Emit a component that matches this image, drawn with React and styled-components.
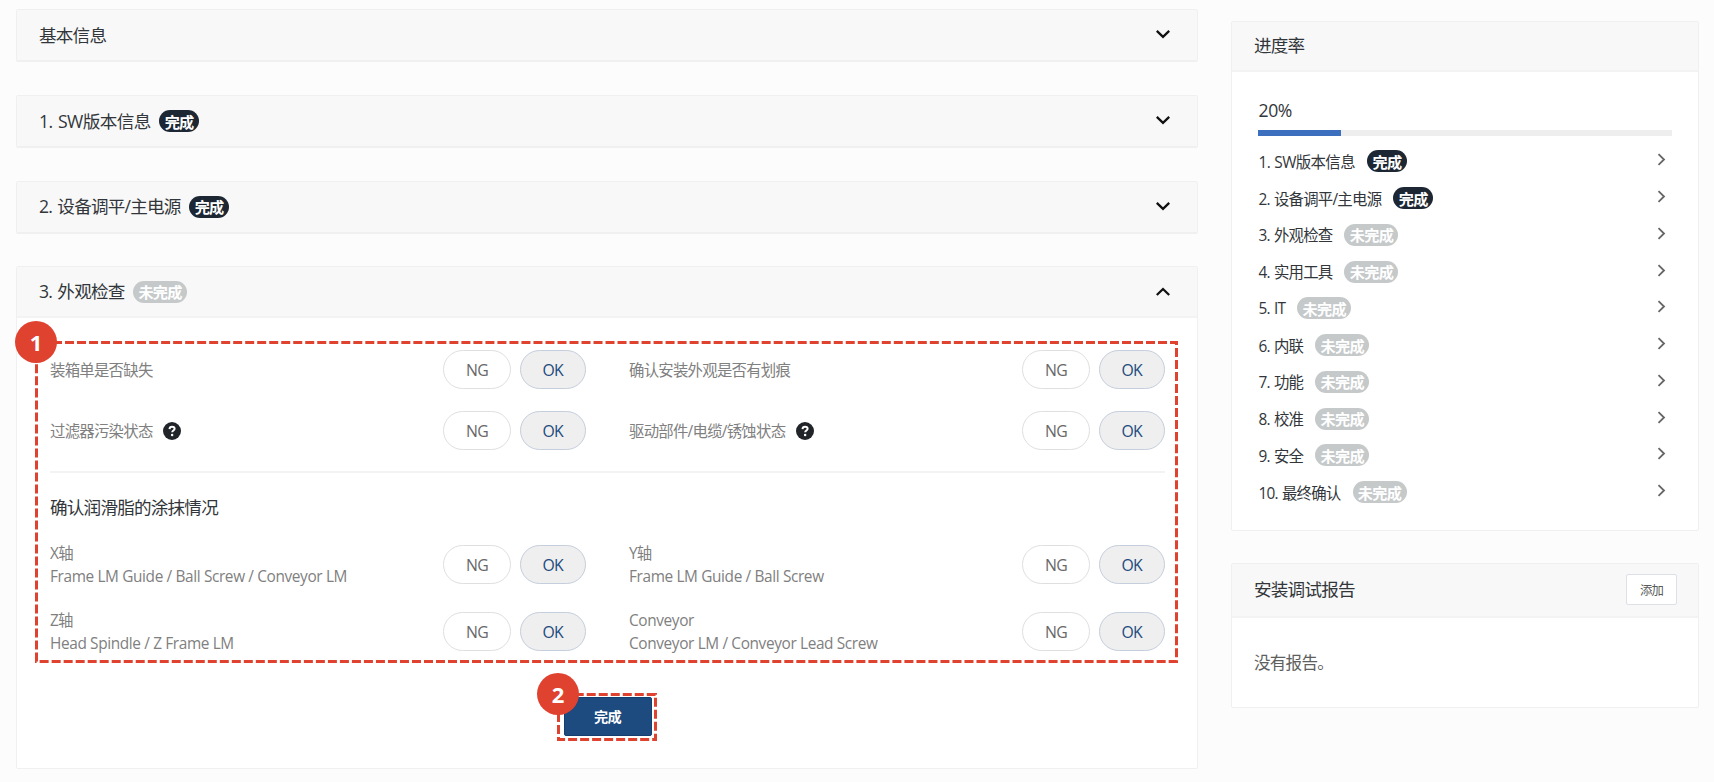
import React from "react";
import styled, { createGlobalStyle } from "styled-components";

const GlobalStyle = createGlobalStyle`
  * { box-sizing: border-box; }
  html, body { margin: 0; background: #fcfcfc; }
  body {
    font-family: "Open Sans", "Noto Sans CJK SC", sans-serif;
    font-size: 15.4px;
    letter-spacing: -0.8px;
    color: #32363a;
    overflow: hidden;
  }
  button { font: inherit; letter-spacing: inherit; margin: 0; padding: 0; }
`;

const Page = styled.div`
  display: flex;
  align-items: flex-start;
  gap: 33px;
  width: 1714px;
  height: 782px;
  padding: 9.4px 15px 0 16px;
`;

const MainColumn = styled.main`
  display: flex;
  flex-direction: column;
  gap: 32.67px;
  width: 1182px;
`;

const SideColumn = styled.aside`
  display: flex;
  flex-direction: column;
  gap: 32px;
  width: 468px;
  padding-top: 11.6px;
`;

const Card = styled.section`
  position: relative;
  height: ${(p) => p.$height}px;
  border: 1px solid #f0f0f0;
  border-bottom-width: ${(p) => (p.$folded ? 2 : 1)}px;
  border-radius: 2px;
  background: #fff;
`;

const CardHeader = styled.header`
  display: flex;
  align-items: center;
  height: ${(p) => p.$height}px;
  padding: 0 ${(p) => p.$right ?? 26}px 0 22px;
  border-bottom: ${(p) => (p.$line ? "2px solid #f3f3f3" : "none")};
  background: #f8f8f8;
`;

const Title = styled.h2`
  flex: none;
  margin: -1px 0 0;
  font-size: 17.6px;
  font-weight: 400;
  line-height: 24px;
  white-space: nowrap;
  word-spacing: 1.5px;
  letter-spacing: ${(p) => p.$spacing ?? -0.8}px;
`;

const HeaderEnd = styled.span`
  display: flex;
  margin-left: auto;
`;

const Badge = styled.span`
  flex: none;
  display: flex;
  align-items: center;
  justify-content: center;
  width: ${(p) => (p.$done ? 40 : 54)}px;
  height: 22px;
  margin-left: ${(p) => p.$gap}px;
  padding-top: 1px;
  border-radius: 11px;
  background: ${(p) => (p.$done ? "#1d2733" : "#c5c9ca")};
  color: #fff;
  font-size: 15.2px;
  font-weight: 700;
  line-height: 20px;
  white-space: nowrap;
`;

const Body = styled.div`
  position: relative;
  padding: 32px 32px 0 33px;
`;

const CheckGrid = styled.div`
  display: grid;
  grid-template-columns: 536px 536px;
  column-gap: 43px;
  row-gap: ${(p) => p.$rowGap}px;
`;

const CheckItem = styled.div`
  display: flex;
  align-items: center;
  height: 39px;
`;

const CheckLabel = styled.div`
  padding-top: 2px;
  color: #808080;
  font-size: 15.4px;
  line-height: 22.6px;
  letter-spacing: -0.74px;
  white-space: nowrap;
`;

const LatinText = styled.div`
  letter-spacing: -0.37px;
`;

const Choices = styled.div`
  display: flex;
  gap: 9px;
  margin-left: auto;
`;

const Choice = styled.button`
  width: ${(p) => (p.$on ? 66 : 68)}px;
  height: 39px;
  padding-right: ${(p) => (p.$on ? 0.5 : 0)}px;
  border: 1px solid ${(p) => (p.$on ? "#c5cedd" : "#dfdfdf")};
  border-radius: 20px;
  background: ${(p) => (p.$on ? "#efefef" : "#fff")};
  color: ${(p) => (p.$on ? "#1d4a7d" : "#686868")};
  font-size: 15.8px;
`;

const Divider = styled.hr`
  height: 2px;
  margin: 21px 0 0;
  border: 0;
  background: #f3f3f3;
`;

const GroupTitle = styled.h3`
  margin: 22px 0 26px;
  font-size: 17.6px;
  font-weight: 400;
  line-height: 24px;
`;

const HelpSvg = styled.svg`
  display: block;
  margin-left: 10.5px;
`;

const SubmitRow = styled.div`
  display: flex;
  padding: 46px 0 0 513.5px;
`;

const SubmitButton = styled.button`
  width: 88px;
  height: 39px;
  padding-bottom: 1.5px;
  border: 1px solid #143d70;
  border-radius: 2px;
  background: #1d4a7f;
  color: #fff;
  font-size: 14.2px;
  font-weight: 700;
`;

const Marks = styled.svg`
  position: absolute;
  inset: 0;
  pointer-events: none;
`;

const MarkNumber = styled.span`
  position: absolute;
  left: ${(p) => p.$x}px;
  top: ${(p) => p.$y}px;
  display: flex;
  align-items: center;
  justify-content: center;
  width: 42px;
  height: 42px;
  border-radius: 50%;
  background: #df422f;
  color: #fff;
  font-family: "Noto Sans", sans-serif;
  font-size: 22px;
  font-weight: 700;
  letter-spacing: 0;
  line-height: 1;
`;

const ProgressBody = styled.div`
  padding: 26px 26px 0;
`;

const Percent = styled.div`
  padding-left: 0.5px;
  font-size: 17.6px;
  line-height: 24px;
  letter-spacing: -0.4px;
`;

const Track = styled.div`
  height: 5.5px;
  margin-top: 8.5px;
  background: #eee;
`;

const Fill = styled.div`
  height: 5.5px;
  background: #3d6fbf;
`;

const StepList = styled.ul`
  margin: 7px 0 0;
  padding: 0 6px 0 0.5px;
  list-style: none;
`;

const Step = styled.li`
  display: flex;
  align-items: center;
  height: 36.75px;
  white-space: nowrap;
  word-spacing: 0.8px;
  letter-spacing: ${(p) => (p.$wide ? -0.6 : -0.75)}px;
`;

const StepArrow = styled.svg`
  display: block;
  margin: -3px 0 0 auto;
`;

const AddButton = styled.button`
  width: 51px;
  height: 31px;
  border: 1px solid #dde0e6;
  border-radius: 2px;
  background: #fff;
  color: #5a5a5a;
  font-size: 12.4px;
`;

const EmptyReport = styled.p`
  margin: 0;
  padding: 33px 22px;
  color: #5e5e5e;
  font-size: 16.6px;
  line-height: 24px;
`;

const Chevron = ({ up }) => (
  <svg width="16" height="12" viewBox="0 0 16 12" fill="none" stroke="#111" strokeWidth="2.3">
    <path d={up ? "M1.8 9 8 3 14.2 9" : "M1.8 1.8 8 7.8 14.2 1.8"} />
  </svg>
);

const HelpIcon = () => (
  <HelpSvg width="18" height="18" viewBox="0 0 18 18">
    <circle cx="9" cy="9" r="9" fill="#212529" />
    <path d="M6.5 7.1C6.6 5.5 7.6 4.7 9.1 4.7s2.5.9 2.5 2.1c0 1.7-2.4 1.8-2.4 3.5" fill="none" stroke="#fff" strokeWidth="2" />
    <circle cx="9.1" cy="12.9" r="1.25" fill="#fff" />
  </HelpSvg>
);

const StatusBadge = ({ done, gap }) => (
  <Badge $done={done} $gap={gap}>{done ? "完成" : "未完成"}</Badge>
);

const Check = ({ label, detail, help }) => (
  <CheckItem>
    <CheckLabel>
      {label}
      {detail && <LatinText>{detail}</LatinText>}
    </CheckLabel>
    {help && <HelpIcon />}
    <Choices>
      <Choice>NG</Choice>
      <Choice $on>OK</Choice>
    </Choices>
  </CheckItem>
);

const FoldedCard = ({ title, done, spacing }) => (
  <Card $height={53} $folded>
    <CardHeader $height={50}>
      <Title $spacing={spacing}>{title}</Title>
      {done && <StatusBadge done gap={8.5} />}
      <HeaderEnd><Chevron /></HeaderEnd>
    </CardHeader>
  </Card>
);

const steps = [
  ["1. SW版本信息", true],
  ["2. 设备调平/主电源", true],
  ["3. 外观检查", false],
  ["4. 实用工具", false],
  ["5. IT", false],
  ["6. 内联", false],
  ["7. 功能", false],
  ["8. 校准", false],
  ["9. 安全", false],
  ["10. 最终确认", false],
];

const percent = 20;

export default function App() {
  return (
    <>
      <GlobalStyle />
      <Page>
        <MainColumn>
          <FoldedCard title="基本信息" />
          <FoldedCard title="1. SW版本信息" spacing={-0.6} done />
          <FoldedCard title="2. 设备调平/主电源" done />
          <Card $height={503}>
            <CardHeader $height={51} $line>
              <Title>3. 外观检查</Title>
              <StatusBadge gap={8.5} />
              <HeaderEnd><Chevron up /></HeaderEnd>
            </CardHeader>
            <Body>
              <CheckGrid $rowGap={22}>
                <Check label="装箱单是否缺失" />
                <Check label="确认安装外观是否有划痕" />
                <Check label="过滤器污染状态" help />
                <Check label="驱动部件/电缆/锈蚀状态" help />
              </CheckGrid>
              <Divider />
              <GroupTitle>确认润滑脂的涂抹情况</GroupTitle>
              <CheckGrid $rowGap={28}>
                <Check label="X轴" detail="Frame LM Guide / Ball Screw / Conveyor LM" />
                <Check label="Y轴" detail="Frame LM Guide / Ball Screw" />
                <Check label="Z轴" detail="Head Spindle / Z Frame LM" />
                <Check label={<LatinText>Conveyor</LatinText>} detail="Conveyor LM / Conveyor Lead Screw" />
              </CheckGrid>
              <SubmitRow>
                <SubmitButton>完成</SubmitButton>
              </SubmitRow>
            </Body>
            <Marks width="1180" height="501" fill="none" stroke="#df422f" strokeWidth="3" strokeDasharray="9.011 3">
              <rect x="19.5" y="75.5" width="1140" height="319" strokeDashoffset="-4.5" />
              <rect x="541.5" y="427.5" width="97" height="45" strokeDashoffset="-4.2" />
            </Marks>
            <MarkNumber $x={-2} $y={53.5}>1</MarkNumber>
            <MarkNumber $x={520} $y={406}>2</MarkNumber>
          </Card>
        </MainColumn>
        <SideColumn>
          <Card $height={510}>
            <CardHeader $height={50} $line>
              <Title>进度率</Title>
            </CardHeader>
            <ProgressBody>
              <Percent>{percent}%</Percent>
              <Track><Fill style={{ width: `${percent}%` }} /></Track>
              <StepList>
                {steps.map(([name, done]) => (
                  <Step key={name} $wide={name.includes("SW")}>
                    <span>{name}</span>
                    <StatusBadge done={done} gap={12} />
                    <StepArrow width="9" height="13" viewBox="0 0 9 13" fill="none" stroke="#666" strokeWidth="1.8">
                      <path d="M1.5 1.2 7 6.5 1.5 11.8" />
                    </StepArrow>
                  </Step>
                ))}
              </StepList>
            </ProgressBody>
          </Card>
          <Card $height={145}>
            <CardHeader $height={54} $line $right={21}>
              <Title>安装调试报告</Title>
              <HeaderEnd><AddButton>添加</AddButton></HeaderEnd>
            </CardHeader>
            <EmptyReport>没有报告。</EmptyReport>
          </Card>
        </SideColumn>
      </Page>
    </>
  );
}
